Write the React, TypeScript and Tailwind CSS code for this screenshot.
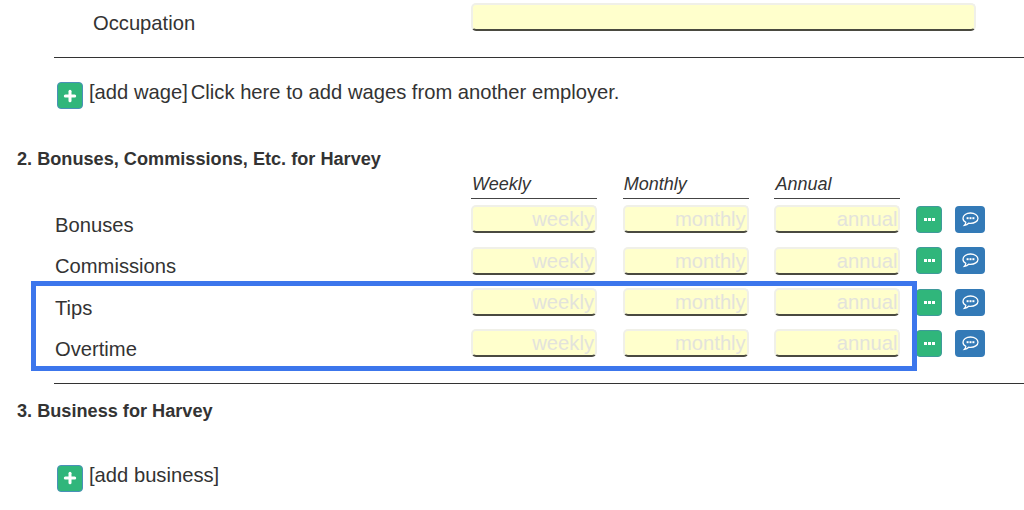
import { Plus } from 'lucide-react'

const incomeRows = ['Bonuses', 'Commissions', 'Tips', 'Overtime']
const periods = ['weekly', 'monthly', 'annual']
const periodTitles = ['Weekly', 'Monthly', 'Annual']

function AddButton() {
  return (
    <span className="flex h-[27px] w-[26px] shrink-0 items-center justify-center rounded-[4px] border border-[#4a90b8] bg-[#30b67b]">
      <Plus className="h-[16px] w-[16px] text-white" strokeWidth={4.5} />
    </span>
  )
}

function MoreButton() {
  return (
    <span className="flex h-[27px] w-[26px] items-center justify-center gap-[1px] rounded-[4px] border border-[#3f9a9a] bg-[#30b67b]">
      <i className="h-[3px] w-[3px] bg-white" />
      <i className="h-[3px] w-[3px] bg-white" />
      <i className="h-[3px] w-[3px] bg-white" />
    </span>
  )
}

function CommentButton() {
  return (
    <span className="flex h-[27px] w-[30px] items-center justify-center rounded-[4px] bg-[#337ab7]">
      <svg width="17" height="15" viewBox="0 0 17 15" fill="none">
        <path d="M8.5 1C4.4 1 1 3.2 1 6.2c0 1.7 1.1 3.2 2.8 4.1-.1 1.1-.5 2.2-1.3 3 1.7-.2 3.2-1 4.2-2.1.6.1 1.2.2 1.8.2 4.1 0 7.5-2.3 7.5-5.2S12.6 1 8.5 1z" stroke="white" strokeWidth="1.3" />
        <rect x="4.6" y="5.2" width="2" height="2" fill="white" />
        <rect x="7.5" y="5.2" width="2" height="2" fill="white" />
        <rect x="10.4" y="5.2" width="2" height="2" fill="white" />
      </svg>
    </span>
  )
}

function YellowInput({ placeholder, className }: { placeholder?: string; className: string }) {
  return (
    <div className={`flex h-[28px] items-center justify-end rounded-[5px] border-2 border-[#f0f0e8] border-b-[#4a4a40] bg-[#ffffcc] pr-[1px] text-[20.2px] leading-none text-[#e3e3dc] ${className}`}>
      {placeholder}
    </div>
  )
}

export default function App() {
  return (
    <div className="relative h-[510px] w-[1024px] overflow-hidden bg-white font-['Liberation_Sans',Arial,sans-serif] text-[20.2px] text-[#333333]">
      <div className="flex h-[57px] items-start pt-[3px]">
        <div className="ml-[93px] w-[378px] pt-[6px] leading-[28px]">Occupation</div>
        <YellowInput className="w-[505px]" />
      </div>

      <div className="ml-[54px] h-px bg-[#333333]" />

      <div className="ml-[57px] mt-[24px] flex items-start">
        <AddButton />
        <span className="ml-[6px] mt-[-3px] leading-[26px]">[add wage]</span>
        <span className="ml-[3px] mt-[-3px] leading-[26px]">Click here to add wages from another employer.</span>
      </div>

      <h2 className="ml-[17px] mt-[39px] text-[18.15px] font-bold leading-[22px]">2. Bonuses, Commissions, Etc. for Harvey</h2>

      <div className="ml-[471px] mt-[4px] flex gap-[25.7px]">
        {periodTitles.map((title) => (
          <div key={title} className="h-[25px] w-[126px] border-b border-[#444444] pl-[1px] text-[18px] italic leading-[21px]">
            {title}
          </div>
        ))}
      </div>

      <div className="mt-[6.4px] flex flex-col gap-[13.33px]">
        {incomeRows.map((row) => (
          <div key={row} className="flex h-[28px] items-center">
            <div className="ml-[55px] w-[416px] pt-[11px] leading-[28px]">{row}</div>
            <div className="flex gap-[25.7px]">
              {periods.map((period) => (
                <YellowInput key={period} placeholder={period} className="w-[126px]" />
              ))}
            </div>
            <div className="ml-[16px]">
              <MoreButton />
            </div>
            <div className="ml-[13px]">
              <CommentButton />
            </div>
          </div>
        ))}
      </div>

      <div className="ml-[54px] mt-[25.6px] h-px bg-[#333333]" />

      <h2 className="ml-[17px] mt-[17px] text-[18.15px] font-bold leading-[20px]">3. Business for Harvey</h2>

      <div className="ml-[57px] mt-[44px] flex items-start">
        <AddButton />
        <span className="ml-[6px] mt-[-3px] leading-[26px]">[add business]</span>
      </div>

      {/* highlight drawn over the tips and overtime rows */}
      <div className="absolute left-[31px] top-[281px] h-[90px] w-[886px] border-[5px] border-[#3c76ec]" />
    </div>
  )
}
